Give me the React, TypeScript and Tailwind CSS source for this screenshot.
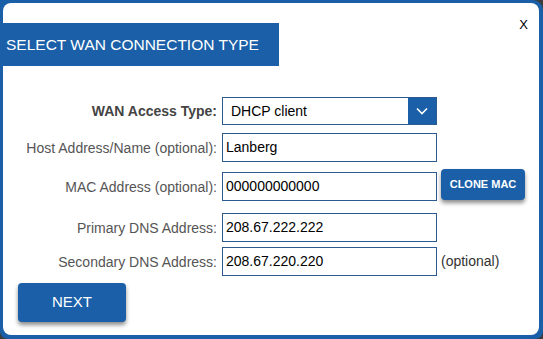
import React from "react";

const font = { fontFamily: '"Liberation Sans", Arial, sans-serif' };

function Row({
  label,
  bold,
  mt,
  children,
}: {
  label: string;
  bold?: boolean;
  mt: string;
  children: React.ReactNode;
}) {
  return (
    <div className={`flex items-center ${mt}`}>
      <div
        className={`w-[219px] pr-[5px] text-right text-[14px] leading-none ${
          bold ? "font-bold text-[#444]" : "text-[#555]"
        }`}
      >
        {label}
      </div>
      {children}
    </div>
  );
}

function TextBox({ value }: { value: string }) {
  return (
    <div className="flex h-[29px] w-[215px] items-center border border-[#2a5a8f] bg-white pl-[3px] text-[14px] text-black">
      {value}
    </div>
  );
}

export default function App() {
  return (
    <div className="h-[339px] w-[543px] bg-[#3c3c3c]" style={font}>
      <div className="h-full w-full rounded-tr-[10px] rounded-b-[8px] bg-[#1a5fa8] pb-[4px] pl-[3px] pr-[4px] pt-[3px]">
        <div className="relative h-full w-full rounded-[8px] bg-white">
          <div className="absolute right-[11px] top-[15px] text-[13px] leading-none text-black">
            X
          </div>
          <div className="h-[20px]" />
          <div className="ml-[-3px] flex h-[43px] w-[279px] items-center bg-[#1a5fa8] pl-[6px] text-[15.5px] text-white">
            SELECT WAN CONNECTION TYPE
          </div>

          <Row label="WAN Access Type:" bold mt="mt-[31px]">
            <div className="flex h-[28px] w-[215px] items-stretch border border-[#2a5a8f] bg-white">
              <div className="flex flex-1 items-center pl-[8px] text-[14px] text-black">
                DHCP client
              </div>
              <div className="flex w-[28px] items-center justify-center bg-[#1a5fa8]">
                <svg width="12" height="8" viewBox="0 0 12 8">
                  <path
                    d="M1 1.5 L6 6.5 L11 1.5"
                    fill="none"
                    stroke="white"
                    strokeWidth="1.6"
                  />
                </svg>
              </div>
            </div>
          </Row>

          <Row label="Host Address/Name (optional):" mt="mt-[8px]">
            <TextBox value="Lanberg" />
          </Row>

          <Row label="MAC Address (optional):" mt="mt-[10px]">
            <TextBox value="000000000000" />
            <div className="ml-[4px] mt-[-4px] flex h-[31px] w-[84px] items-center justify-center rounded-[4px] bg-[#1a5fa8] text-[11px] font-bold text-white shadow-[0_3px_4px_rgba(0,0,0,0.45)]">
              CLONE MAC
            </div>
          </Row>

          <Row label="Primary DNS Address:" mt="mt-[12px]">
            <TextBox value="208.67.222.222" />
          </Row>

          <Row label="Secondary DNS Address:" mt="mt-[5px]">
            <TextBox value="208.67.220.220" />
            <div className="ml-[4px] text-[14px] text-[#333]">(optional)</div>
          </Row>

          <div className="ml-[15px] mt-[7px] flex h-[39px] w-[108px] items-center justify-center rounded-[4px] bg-[#1a5fa8] text-[15px] text-white shadow-[0_3px_4px_rgba(0,0,0,0.45)]">
            NEXT
          </div>
        </div>
      </div>
    </div>
  );
}
